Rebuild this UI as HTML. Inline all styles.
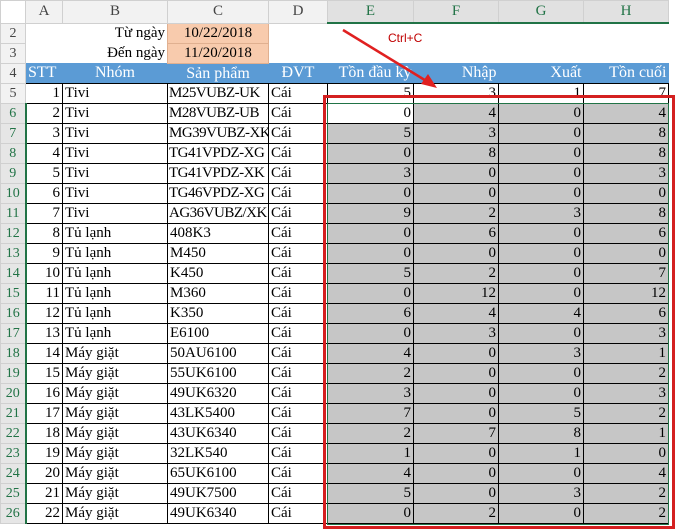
<!DOCTYPE html><html><head><meta charset="utf-8"><style>
body{margin:0;width:678px;height:530px;overflow:hidden;background:#fff;font-family:"Liberation Serif",serif;}
table{border-collapse:collapse;table-layout:fixed;position:absolute;left:0;top:0;width:678px;}
td{height:19px;padding:0 2px;font-size:15px;white-space:nowrap;overflow:hidden;line-height:19px;border:1px solid #000;}
td.c{padding:0 1px;letter-spacing:-0.5px}
td.rh{background:#e6e6e6;color:#217346;text-align:center;border:1px solid #d0d0d0;border-right:2px solid #217346;padding:0;font-size:14px}
td.rh0{background:#f2f2f2;color:#444;text-align:center;border:1px solid #d0d0d0;padding:0;font-size:14px}
tr.ch td{height:21px;background:#f2f2f2;border:1px solid #d0d0d0;text-align:center;color:#444;font-size:15px}
tr.ch td.s{background:#e1e1e1;border-bottom:2px solid #217346;color:#217346}
td.n{text-align:right}
td.g{background:#c6c6c6;text-align:right}
td.e{border:none}
tr.hd td.b{background:#5b9bd5;color:#fff;border:none;font-size:16px}
td.o{background:#f8cbad;text-align:center;border:1px solid #e0b090}
</style></head><body>
<table>
<colgroup><col style="width:25px"><col style="width:37px"><col style="width:105px"><col style="width:101px"><col style="width:59px"><col style="width:86px"><col style="width:85px"><col style="width:85px"><col style="width:85px"><col style="width:10px"></colgroup>
<tr class="ch"><td style="background:#fff"></td><td>A</td><td>B</td><td>C</td><td>D</td><td class="s">E</td><td class="s">F</td><td class="s">G</td><td class="s">H</td><td style="background:#fff;border:none"></td></tr>
<tr><td class="rh0">2</td><td class="e"></td><td class="e" style="text-align:right">Từ ngày</td><td class="o">10/22/2018</td><td class="e" colspan="6"></td></tr>
<tr><td class="rh0">3</td><td class="e"></td><td class="e" style="text-align:right">Đến ngày</td><td class="o">11/20/2018</td><td class="e" colspan="6"></td></tr>
<tr class="hd"><td class="rh0">4</td><td class="b">STT</td><td class="b" style="text-align:center">Nhóm</td><td class="b" style="text-align:center">Sản phẩm</td><td class="b" style="text-align:center">ĐVT</td><td class="b" style="text-align:right">Tồn đầu kỳ</td><td class="b" style="text-align:right">Nhập</td><td class="b" style="text-align:right">Xuất</td><td class="b" style="text-align:right">Tồn cuối</td><td class="e"></td></tr>
<tr><td class="rh0">5</td><td class="n">1</td><td>Tivi</td><td class="c">M25VUBZ-UK</td><td>Cái</td><td class="n">5</td><td class="n">3</td><td class="n">1</td><td class="n">7</td><td class="e"></td></tr>
<tr><td class="rh">6</td><td class="n">2</td><td>Tivi</td><td class="c">M28VUBZ-UB</td><td>Cái</td><td class="n">0</td><td class="g">4</td><td class="g">0</td><td class="g">4</td><td class="e"></td></tr>
<tr><td class="rh">7</td><td class="n">3</td><td>Tivi</td><td class="c">MG39VUBZ-XK</td><td>Cái</td><td class="g">5</td><td class="g">3</td><td class="g">0</td><td class="g">8</td><td class="e"></td></tr>
<tr><td class="rh">8</td><td class="n">4</td><td>Tivi</td><td class="c">TG41VPDZ-XG</td><td>Cái</td><td class="g">0</td><td class="g">8</td><td class="g">0</td><td class="g">8</td><td class="e"></td></tr>
<tr><td class="rh">9</td><td class="n">5</td><td>Tivi</td><td class="c">TG41VPDZ-XK</td><td>Cái</td><td class="g">3</td><td class="g">0</td><td class="g">0</td><td class="g">3</td><td class="e"></td></tr>
<tr><td class="rh">10</td><td class="n">6</td><td>Tivi</td><td class="c">TG46VPDZ-XG</td><td>Cái</td><td class="g">0</td><td class="g">0</td><td class="g">0</td><td class="g">0</td><td class="e"></td></tr>
<tr><td class="rh">11</td><td class="n">7</td><td>Tivi</td><td class="c">AG36VUBZ/XK</td><td>Cái</td><td class="g">9</td><td class="g">2</td><td class="g">3</td><td class="g">8</td><td class="e"></td></tr>
<tr><td class="rh">12</td><td class="n">8</td><td>Tủ lạnh</td><td>408K3</td><td>Cái</td><td class="g">0</td><td class="g">6</td><td class="g">0</td><td class="g">6</td><td class="e"></td></tr>
<tr><td class="rh">13</td><td class="n">9</td><td>Tủ lạnh</td><td>M450</td><td>Cái</td><td class="g">0</td><td class="g">0</td><td class="g">0</td><td class="g">0</td><td class="e"></td></tr>
<tr><td class="rh">14</td><td class="n">10</td><td>Tủ lạnh</td><td>K450</td><td>Cái</td><td class="g">5</td><td class="g">2</td><td class="g">0</td><td class="g">7</td><td class="e"></td></tr>
<tr><td class="rh">15</td><td class="n">11</td><td>Tủ lạnh</td><td>M360</td><td>Cái</td><td class="g">0</td><td class="g">12</td><td class="g">0</td><td class="g">12</td><td class="e"></td></tr>
<tr><td class="rh">16</td><td class="n">12</td><td>Tủ lạnh</td><td>K350</td><td>Cái</td><td class="g">6</td><td class="g">4</td><td class="g">4</td><td class="g">6</td><td class="e"></td></tr>
<tr><td class="rh">17</td><td class="n">13</td><td>Tủ lạnh</td><td>E6100</td><td>Cái</td><td class="g">0</td><td class="g">3</td><td class="g">0</td><td class="g">3</td><td class="e"></td></tr>
<tr><td class="rh">18</td><td class="n">14</td><td>Máy giặt</td><td>50AU6100</td><td>Cái</td><td class="g">4</td><td class="g">0</td><td class="g">3</td><td class="g">1</td><td class="e"></td></tr>
<tr><td class="rh">19</td><td class="n">15</td><td>Máy giặt</td><td>55UK6100</td><td>Cái</td><td class="g">2</td><td class="g">0</td><td class="g">0</td><td class="g">2</td><td class="e"></td></tr>
<tr><td class="rh">20</td><td class="n">16</td><td>Máy giặt</td><td>49UK6320</td><td>Cái</td><td class="g">3</td><td class="g">0</td><td class="g">0</td><td class="g">3</td><td class="e"></td></tr>
<tr><td class="rh">21</td><td class="n">17</td><td>Máy giặt</td><td>43LK5400</td><td>Cái</td><td class="g">7</td><td class="g">0</td><td class="g">5</td><td class="g">2</td><td class="e"></td></tr>
<tr><td class="rh">22</td><td class="n">18</td><td>Máy giặt</td><td>43UK6340</td><td>Cái</td><td class="g">2</td><td class="g">7</td><td class="g">8</td><td class="g">1</td><td class="e"></td></tr>
<tr><td class="rh">23</td><td class="n">19</td><td>Máy giặt</td><td>32LK540</td><td>Cái</td><td class="g">1</td><td class="g">0</td><td class="g">1</td><td class="g">0</td><td class="e"></td></tr>
<tr><td class="rh">24</td><td class="n">20</td><td>Máy giặt</td><td>65UK6100</td><td>Cái</td><td class="g">4</td><td class="g">0</td><td class="g">0</td><td class="g">4</td><td class="e"></td></tr>
<tr><td class="rh">25</td><td class="n">21</td><td>Máy giặt</td><td>49UK7500</td><td>Cái</td><td class="g">5</td><td class="g">0</td><td class="g">3</td><td class="g">2</td><td class="e"></td></tr>
<tr><td class="rh">26</td><td class="n">22</td><td>Máy giặt</td><td>49UK6340</td><td>Cái</td><td class="g">0</td><td class="g">2</td><td class="g">0</td><td class="g">2</td><td class="e"></td></tr>
</table>
<div style="position:absolute;left:327px;top:103px;width:340px;height:420px;border:1px solid #217346"></div>
<div style="position:absolute;left:323px;top:95px;width:346px;height:428px;border:3px solid #d42020"></div>
<div style="position:absolute;left:388px;top:31px;font-family:'Liberation Sans',sans-serif;font-size:12px;color:#c00000">Ctrl+C</div>
<svg style="position:absolute;left:0;top:0" width="678" height="530"><line x1="343" y1="30" x2="428" y2="82" stroke="#e02020" stroke-width="2.5"/><polygon points="437,88 421,84 428,74" fill="#e02020"/></svg>
</body></html>
